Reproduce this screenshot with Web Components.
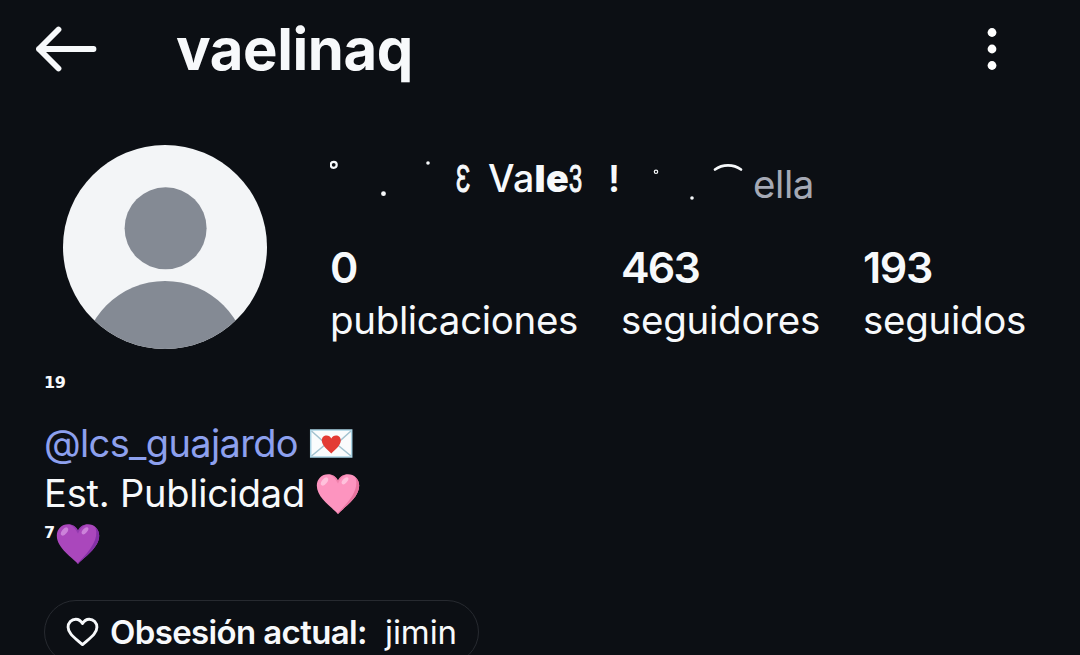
<!DOCTYPE html>
<html lang="es">
<head>
<meta charset="utf-8">
<title>vaelinaq</title>
<style>
  body {
    margin: 0;
    height: 655px;
    overflow: hidden;
    background: #0c0f14;
    color: #f7f9fb;
    font-family: Inter, "Liberation Sans", sans-serif;
  }
</style>
</head>
<body>
<profile-page></profile-page>
<script>
// one line of text, letter-spaced to fill its width attribute
class FitText extends HTMLElement {
  constructor() {
    super();
    this.attachShadow({ mode: 'open' });
  }

  connectedCallback() {
    this.shadowRoot.innerHTML = `
      <style>
        :host { display: block; white-space: normal; }
        span { display: inline-block; vertical-align: top; white-space: pre; }
      </style>
      <span><slot></slot></span>
    `;
    const span = this.shadowRoot.querySelector('span');
    const width = Number(this.getAttribute('width'));
    const count = this.textContent.length;
    if (width && count) {
      this.style.width = width + 'px';
      span.style.letterSpacing = (width - span.getBoundingClientRect().width) / count + 'px';
    }
  }
}

class ProfileHeader extends HTMLElement {
  constructor() {
    super();
    this.attachShadow({ mode: 'open' });
  }

  connectedCallback() {
    this.shadowRoot.innerHTML = `
      <style>
        :host {
          display: flex;
          align-items: center;
          height: 98px;
          padding: 0 80px 0 34px;
        }
        .back { width: 64px; height: 50px; margin-right: 78px; }
        .menu { width: 16px; height: 48px; margin-left: auto; }
        fit-text { font-size: 58px; font-weight: 700; line-height: 98px; }
      </style>
      <svg class="back" viewBox="0 0 64 50" fill="none" stroke="#f7f9fb" stroke-width="5.8" stroke-linecap="round" stroke-linejoin="round">
        <path d="M24.5 5.5 5 25l19.500 19.500M5 25h54.500"/>
      </svg>
      <fit-text width="237">${this.getAttribute('username')}</fit-text>
      <svg class="menu" viewBox="0 0 16 48" fill="#fff">
        <circle cx="8" cy="7.500" r="4.400"/>
        <circle cx="8" cy="24" r="4.400"/>
        <circle cx="8" cy="40.500" r="4.400"/>
      </svg>
    `;
  }
}

class ProfileAvatar extends HTMLElement {
  constructor() {
    super();
    this.attachShadow({ mode: 'open' });
  }

  connectedCallback() {
    this.shadowRoot.innerHTML = `
      <style>
        :host { display: block; width: 204px; height: 204px; border-radius: 50%; overflow: hidden; background: #f3f5f7; }
        svg { display: block; }
      </style>
      <svg width="204" height="204" viewBox="0 0 204 204" fill="#848a94">
        <circle cx="102.600" cy="83.300" r="41"/>
        <circle cx="102" cy="218.700" r="82.700"/>
      </svg>
    `;
  }
}

class ProfileName extends HTMLElement {
  constructor() {
    super();
    this.attachShadow({ mode: 'open' });
  }

  connectedCallback() {
    this.shadowRoot.innerHTML = `
      <style>
        :host { display: flex; height: 60px; font-size: 37.500px; line-height: 62px; }
        svg { display: block; flex: none; }
        .brace { width: 13px; font-family: "Liberation Sans", sans-serif; font-size: 38px; }
        .brace span { display: inline-block; transform: scaleX(0.62); transform-origin: 0 50%; -webkit-text-stroke: 1.1px #f7f9fb; }
        .name { font-weight: 500; margin-left: 19px; }
        .name b { font-weight: 900; }
        .bang { font-weight: 600; margin-left: 26px; width: 16px; }
        .pronoun { color: #a5a9b5; font-size: 38.500px; line-height: 73px; margin-left: 9px; }
      </style>
      <svg width="126" height="60" viewBox="330 148 126 60" fill="#f7f9fb">
        <circle cx="333.700" cy="164.800" r="3" fill="none" stroke="#f7f9fb" stroke-width="2.200"/>
        <circle cx="383.500" cy="193.700" r="2.400"/>
        <circle cx="428" cy="163" r="1.800"/>
      </svg>
      <div class="brace"><span>Ɛ</span></div>
      <fit-text class="name" width="81">Va<b>le</b></fit-text>
      <div class="brace"><span>3</span></div>
      <div class="bang">!</div>
      <svg width="120" height="60" viewBox="624 148 120 60" fill="#f7f9fb">
        <circle cx="656" cy="171.800" r="1.700" fill="none" stroke="#f7f9fb" stroke-width="1.200"/>
        <circle cx="692" cy="198" r="1.800"/>
        <path d="M715 169.500c7.500-5.500 18.500-5.500 26 0" fill="none" stroke="#f7f9fb" stroke-width="2.700" stroke-linecap="round"/>
      </svg>
      <fit-text class="pronoun" width="61">ella</fit-text>
    `;
  }
}

class ProfileStat extends HTMLElement {
  constructor() {
    super();
    this.attachShadow({ mode: 'open' });
  }

  connectedCallback() {
    this.shadowRoot.innerHTML = `
      <style>
        :host { display: block; }
        .count { font-size: 43px; font-weight: 600; line-height: 50px; }
        .label { font-size: 38.500px; line-height: 57px; }
      </style>
      <fit-text class="count" width="${this.getAttribute('count-width')}">${this.getAttribute('count')}</fit-text>
      <fit-text class="label" width="${this.getAttribute('label-width')}">${this.getAttribute('label')}</fit-text>
    `;
  }
}

class EmojiIcon extends HTMLElement {
  constructor() {
    super();
    this.attachShadow({ mode: 'open' });
  }

  heart(fill, shade, light) {
    return `
      <svg width="44" height="42" viewBox="0 0 44 42">
        <path d="M22 41C17 35 .8 25.500.8 12.600.8 6 5.800 1.200 12 1.200c4.500 0 8 2.200 10 6.200 2-4 5.500-6.200 10-6.200 6.200 0 11.200 4.800 11.200 11.400C43.200 25.500 27 35 22 41z" fill="${fill}"/>
        <path d="M39.500 4.500c3.500 11-4 22-18 35.700l.5.800C27 35 43.200 25.500 43.200 12.600c0-3.300-1.400-6.200-3.700-8.100z" fill="${shade}"/>
        <path d="M20.500 5.500C19 3 16 1.500 13.500 1.400c3 1.200 5.500 3.600 8.500 9.100 2-4.500 4.500-7.500 8-9.100-4 .4-6.500 2.700-8 6z" fill="${shade}" opacity=".6"/>
        <ellipse cx="8.500" cy="8.500" rx="2.600" ry="4.800" transform="rotate(38 8.500 8.500)" fill="${light}"/>
        <ellipse cx="29" cy="7.800" rx="2.200" ry="4.300" transform="rotate(42 29 7.800)" fill="${light}"/>
      </svg>
    `;
  }

  letter() {
    return `
      <svg width="44" height="42" viewBox="0 0 44 42">
        <rect x="1.700" y="7" width="41" height="27" fill="#fafcfd" stroke="#a9d3e4" stroke-width="1.500"/>
        <path d="M2.500 8 17 21 2.500 33M42 8 27.500 21 42 33" fill="none" stroke="#a3c3d0" stroke-width="1.500"/>
        <path d="M22.300 30.500C18.500 26.500 12.800 22.500 12.800 17.500c0-3.200 2.100-5.100 4.800-5.100 2.100 0 3.800 1.100 4.700 3 .9-1.900 2.600-3 4.700-3 2.700 0 4.800 1.900 4.800 5.100 0 5-5.700 9-9.500 13z" fill="#e33b34"/>
      </svg>
    `;
  }

  connectedCallback() {
    const icons = {
      letter: this.letter(),
      pink: this.heart('#fd94bf', '#e8749f', '#ffc1dc'),
      purple: this.heart('#aa47bc', '#8430a6', '#cc82da'),
    };
    this.shadowRoot.innerHTML = `
      <style>
        :host { display: block; flex: none; }
        svg { display: block; }
      </style>
      ${icons[this.getAttribute('name')]}
    `;
  }
}

class ProfileBio extends HTMLElement {
  constructor() {
    super();
    this.attachShadow({ mode: 'open' });
  }

  connectedCallback() {
    this.shadowRoot.innerHTML = `
      <style>
        :host { display: block; font-size: 38px; }
        .line { display: flex; align-items: center; height: 50px; line-height: 48px; }
        fit-text { height: 50px; }
        .sup { width: 22px; font: bold 16px/28px "DejaVu Sans", sans-serif; height: 50px; letter-spacing: -0.5px; }
        .mention { color: #8da0ee; }
        .mention + emoji-icon { margin-left: 11px; }
        .school + emoji-icon { margin-left: 11px; }
        .sup + emoji-icon { margin-left: -10px; }
      </style>
      <div class="line"><div class="sup">19</div></div>
      <div class="line"><fit-text class="mention" width="254">@lcs_guajardo</fit-text><emoji-icon name="letter"></emoji-icon></div>
      <div class="line"><fit-text class="school" width="261">Est. Publicidad</fit-text><emoji-icon name="pink"></emoji-icon></div>
      <div class="line"><div class="sup">7</div><emoji-icon name="purple"></emoji-icon></div>
    `;
  }
}

class ProfilePill extends HTMLElement {
  constructor() {
    super();
    this.attachShadow({ mode: 'open' });
  }

  connectedCallback() {
    this.shadowRoot.innerHTML = `
      <style>
        :host {
          box-sizing: border-box;
          display: flex;
          align-items: center;
          width: 435px;
          height: 64px;
          padding-left: 21px;
          border: 1.500px solid #272a30;
          border-radius: 32px;
          font-size: 33px;
          line-height: 60px;
        }
        svg { flex: none; margin-right: 10px; }
        .label { font-weight: 600; }
        .value { margin-left: 18px; }
      </style>
      <svg width="34" height="30" viewBox="0 0 34 30" fill="none" stroke="#f7f9fb" stroke-width="2.900" stroke-linejoin="round">
        <path d="M16.500 6.600C14.900 3.700 12.400 2.200 9.800 2.200c-4.400 0-7.700 3.500-7.700 8 0 6.600 7.200 11 14.400 17.400C23.700 21.200 30.900 16.800 30.900 10.200c0-4.500-3.300-8-7.700-8-2.600 0-5.100 1.500-6.700 4.400z"/>
      </svg>
      <fit-text class="label" width="257">${this.getAttribute('label')}</fit-text>
      <fit-text class="value" width="72">${this.getAttribute('value')}</fit-text>
    `;
  }
}

class ProfilePage extends HTMLElement {
  constructor() {
    super();
    this.attachShadow({ mode: 'open' });
  }

  connectedCallback() {
    this.shadowRoot.innerHTML = `
      <style>
        :host { display: block; height: 655px; overflow: hidden; }
        .summary { display: flex; height: 271px; }
        profile-avatar { margin: 47px 63px 0; }
        .info { padding-top: 50px; }
        .stats { display: flex; gap: 43px; margin-top: 34px; }
        profile-bio, profile-pill { margin-left: 44px; }
        profile-pill { margin-top: 31px; }
      </style>
      <profile-header username="vaelinaq"></profile-header>
      <div class="summary">
        <profile-avatar></profile-avatar>
        <div class="info">
          <profile-name></profile-name>
          <div class="stats">
            <profile-stat count="0" count-width="26" label="publicaciones" label-width="248"></profile-stat>
            <profile-stat count="463" count-width="78" label="seguidores" label-width="199"></profile-stat>
            <profile-stat count="193" count-width="69" label="seguidos" label-width="163"></profile-stat>
          </div>
        </div>
      </div>
      <profile-bio></profile-bio>
      <profile-pill label="Obsesión actual:" value="jimin"></profile-pill>
    `;
  }
}

customElements.define('fit-text', FitText);
customElements.define('profile-header', ProfileHeader);
customElements.define('profile-avatar', ProfileAvatar);
customElements.define('profile-name', ProfileName);
customElements.define('profile-stat', ProfileStat);
customElements.define('emoji-icon', EmojiIcon);
customElements.define('profile-bio', ProfileBio);
customElements.define('profile-pill', ProfilePill);
customElements.define('profile-page', ProfilePage);
</script>
</body>
</html>
